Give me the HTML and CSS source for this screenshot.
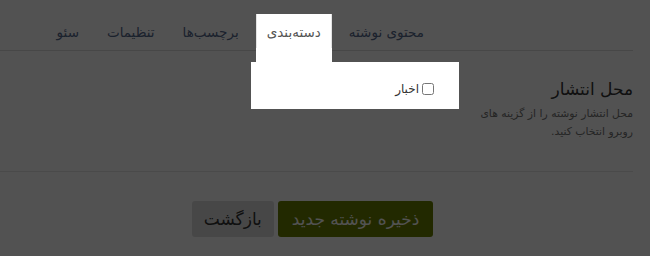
FILE: index.html
```html
<!DOCTYPE html>
<html lang="fa" dir="rtl">
<head>
<meta charset="utf-8">
<title>نوشته جدید</title>
<link rel="stylesheet" href="styles.css">
</head>
<body>
<div class="page">
  <ul class="tabs">
    <li class="tab"><a href="#">محتوی نوشته</a></li>
    <li class="tab active"><a href="#">دسته‌بندی</a></li>
    <li class="tab"><a href="#">برچسب‌ها</a></li>
    <li class="tab"><a href="#">تنظیمات</a></li>
    <li class="tab"><a href="#">سئو</a></li>
  </ul>
  <div class="row">
    <div class="side">
      <h3 class="side-title">محل انتشار</h3>
      <p class="side-help">محل انتشار نوشته را از گزینه های روبرو انتخاب کنید.</p>
    </div>
    <div class="main">
      <div class="cat-box">
        <label class="cat"><input type="checkbox" class="cat-check"> <span>اخبار</span></label>
      </div>
    </div>
  </div>
  <hr class="sep">
  <div class="actions">
    <button class="btn btn-save">ذخیره نوشته جدید</button>
    <button class="btn btn-back">بازگشت</button>
  </div>
</div>
<div class="overlay"></div>
</body>
</html>
```
FILE: styles.css
```css
html, body {
  margin: 0;
  padding: 0;
  background: #fff;
  height: 100%;
  overflow: hidden;
}
body {
  font-family: "DejaVu Sans", sans-serif;
  color: #333;
  direction: rtl;
}
.page {
  width: 633px;
  margin-right: 17px;
}
.tabs {
  list-style: none;
  margin: 0;
  padding: 14px 198px 0 0;
  display: flex;
  align-items: flex-start;
  border-bottom: 1px solid #ddd;
  height: 36px;
}
.tab {
  margin-left: 6px;
}
.tab a {
  display: block;
  padding: 1px 11px 0;
  line-height: 35px;
  font-size: 13.5px;
  color: #56698c;
  text-decoration: none;
  white-space: nowrap;
}
.tab.active {
  position: relative;
  z-index: 10;
  background: #fff;
  height: 48px;
}
.tab.active::before,
.tab.active::after {
  content: "";
  position: absolute;
  top: 0;
  height: 34px;
  width: 1px;
  background: #e3e3e3;
}
.tab.active::before { right: 0; }
.tab.active::after { left: 0; }
.tab.active a {
  color: #555;
}
.row {
  display: flex;
  padding-top: 11px;
}
.side {
  width: 162px;
  flex: none;
}
.side-title {
  margin: 15px 0 0;
  font-size: 17px;
  font-weight: normal;
  line-height: 24px;
  color: #333;
}
.side-help {
  margin: 4px 0 0;
  font-size: 10.8px;
  line-height: 18px;
  color: #737373;
}
.main {
  flex: 1;
  padding-right: 12px;
}
.cat-box {
  position: relative;
  z-index: 10;
  background: #fff;
  width: 208px;
  height: 47px;
  box-sizing: border-box;
  padding: 17px 25px 0 0;
}
.cat {
  display: flex;
  align-items: center;
  gap: 3px;
  font-size: 12px;
  line-height: 20px;
  color: #333;
}
.cat-check {
  margin: 0;
  width: 12px;
  height: 12px;
}
.sep {
  margin: 30px 0 0;
  border: 0;
  border-top: 1px solid #e5e5e5;
}
.actions {
  display: flex;
  justify-content: center;
  gap: 4px;
  padding: 29px 8px 0 0;
}
.btn {
  font-family: "DejaVu Sans", sans-serif;
  font-size: 17px;
  height: 36px;
  line-height: 36px;
  padding: 0 14px;
  border: 0;
  border-radius: 3px;
  cursor: pointer;
}
.btn-save {
  background: #6a8000;
  color: #fff;
}
.btn-back {
  background: #dedede;
  color: #333;
  padding: 0 12px;
}
.overlay {
  position: fixed;
  inset: 0;
  background: rgba(0, 0, 0, 0.68);
  z-index: 5;
}
```
